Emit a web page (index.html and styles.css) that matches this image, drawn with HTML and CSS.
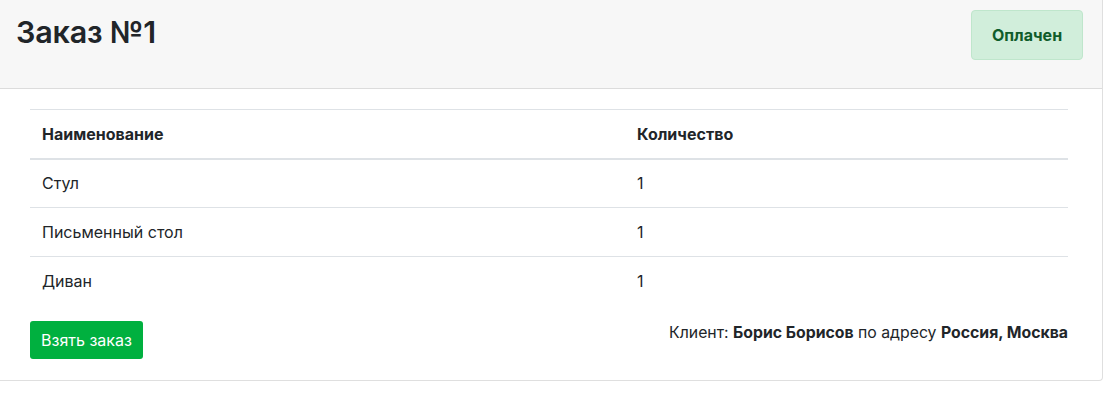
FILE: index.html
```html
<!DOCTYPE html>
<html lang="ru">
<head>
<meta charset="utf-8">
<title>Заказ №1</title>
<link rel="stylesheet" href="styles.css">
</head>
<body>
<div class="card">
  <div class="card-header">
    <h2 class="title">Заказ №1</h2>
    <div class="status">Оплачен</div>
  </div>
  <div class="card-body">
    <table class="table">
      <thead>
        <tr><th class="col-name">Наименование</th><th>Количество</th></tr>
      </thead>
      <tbody>
        <tr><td>Стул</td><td>1</td></tr>
        <tr><td>Письменный стол</td><td>1</td></tr>
        <tr><td>Диван</td><td>1</td></tr>
      </tbody>
    </table>
    <div class="footer">
      <button class="btn-take">Взять заказ</button>
      <div class="client">Клиент: <b>Борис Борисов</b> по адресу <b>Россия, Москва</b></div>
    </div>
  </div>
</div>
</body>
</html>
```
FILE: styles.css
```css
* { box-sizing: border-box; }
html, body { margin: 0; padding: 0; background: #fff; }
body {
  font-family: Inter, "Liberation Sans", sans-serif;
  font-size: 16px;
  color: #212529;
}
.card {
  width: 1103px;
  height: 381px;
  border: 1px solid #dfdfdf;
  border-left: none;
  border-top: none;
  border-radius: 0 0 4px 0;
  display: flex;
  flex-direction: column;
}
.card-header {
  height: 89px;
  background: #f7f7f7;
  border-bottom: 1px solid #dcdcdc;
  display: flex;
  justify-content: space-between;
  align-items: flex-start;
  padding: 10px 19px 0 16px;
}
.title {
  margin: 4px 0 0 0;
  font-size: 30.5px;
  font-weight: 600;
  line-height: 36px;
  letter-spacing: -0.2px;
}
.status {
  width: 112px;
  height: 50px;
  background: #d1eedb;
  border: 1px solid #bfe6cc;
  border-radius: 4px;
  color: #0f5c2a;
  font-weight: 700;
  font-size: 16px;
  display: flex;
  align-items: center;
  justify-content: center;
}
.card-body {
  flex: 1;
  padding: 20px 34px 0 30px;
}
.table {
  width: 100%;
  border-collapse: collapse;
  border-top: 1px solid #dee2e6;
}
.table th, .table td {
  text-align: left;
  padding: 0 12px;
  height: 49px;
  border-bottom: 1px solid #dee2e6;
  vertical-align: middle;
}
.table th {
  font-weight: 700;
  height: 49px;
}
.table thead tr th { border-bottom: 2px solid #dee2e6; }
.table tbody tr:last-child td { border-bottom: none; }
.col-name { width: 595px; }
.footer {
  display: flex;
  justify-content: space-between;
  align-items: center;
  margin-top: 15px;
}
.btn-take {
  font-family: inherit;
  font-size: 16px;
  color: #fff;
  background: #00b03f;
  border: none;
  border-radius: 3px;
  height: 38px;
  padding: 0 11px;
  cursor: pointer;
}
.client {
  font-size: 15.8px;
  margin-bottom: 15px;
}
.client b { font-weight: 700; }
```
